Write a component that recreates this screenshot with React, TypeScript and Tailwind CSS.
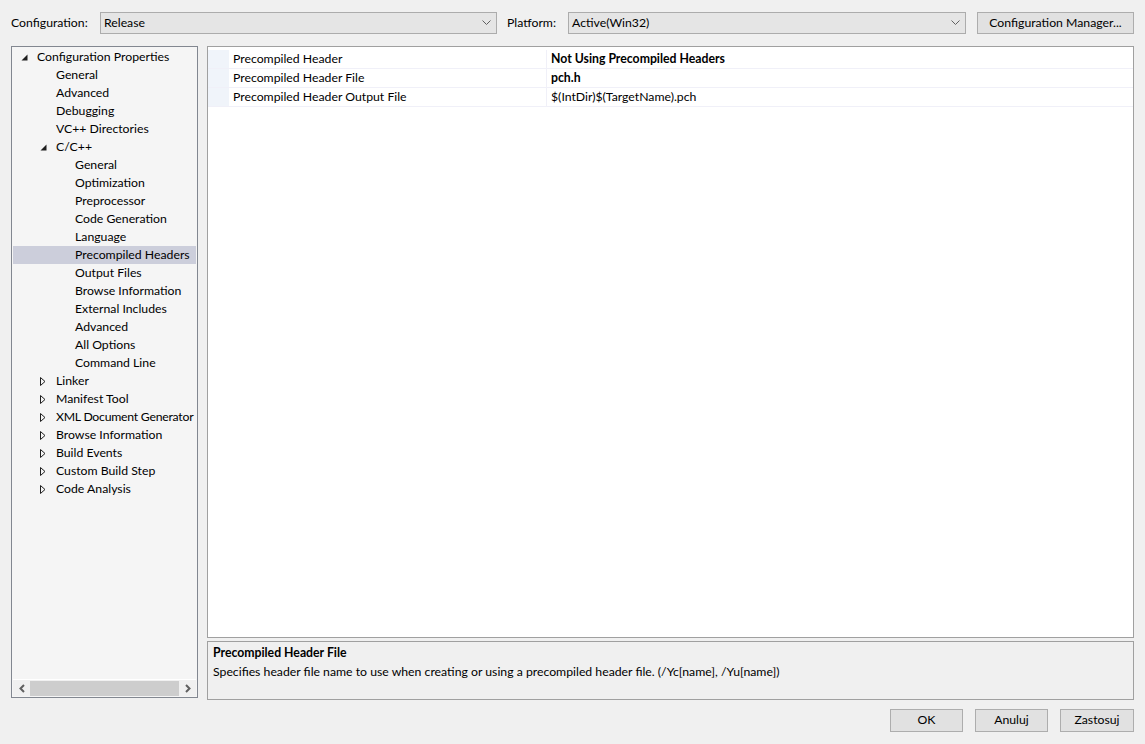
const font = { fontFamily: 'Lato, "Noto Sans", sans-serif' };

type Node = { label: string; level: number; arrow?: "open" | "closed"; selected?: boolean; tight?: boolean };

const tree: Node[] = [
  { label: "Configuration Properties", level: 0, arrow: "open" },
  { label: "General", level: 1 },
  { label: "Advanced", level: 1 },
  { label: "Debugging", level: 1 },
  { label: "VC++ Directories", level: 1 },
  { label: "C/C++", level: 1, arrow: "open" },
  { label: "General", level: 2 },
  { label: "Optimization", level: 2 },
  { label: "Preprocessor", level: 2 },
  { label: "Code Generation", level: 2 },
  { label: "Language", level: 2 },
  { label: "Precompiled Headers", level: 2, selected: true },
  { label: "Output Files", level: 2 },
  { label: "Browse Information", level: 2 },
  { label: "External Includes", level: 2 },
  { label: "Advanced", level: 2 },
  { label: "All Options", level: 2 },
  { label: "Command Line", level: 2 },
  { label: "Linker", level: 1, arrow: "closed" },
  { label: "Manifest Tool", level: 1, arrow: "closed" },
  { label: "XML Document Generator", level: 1, arrow: "closed", tight: true },
  { label: "Browse Information", level: 1, arrow: "closed" },
  { label: "Build Events", level: 1, arrow: "closed" },
  { label: "Custom Build Step", level: 1, arrow: "closed" },
  { label: "Code Analysis", level: 1, arrow: "closed" },
];

const rows = [
  { name: "Precompiled Header", value: "Not Using Precompiled Headers", bold: true },
  { name: "Precompiled Header File", value: "pch.h", bold: true },
  { name: "Precompiled Header Output File", value: "$(IntDir)$(TargetName).pch", bold: false },
];

function Chevron() {
  return (
    <svg width="9" height="6" viewBox="0 0 9 6" className="shrink-0">
      <path d="M0.5 0.5 L4.5 4.5 L8.5 0.5" fill="none" stroke="#606060" strokeWidth="1" />
    </svg>
  );
}

function Combo({ value, width }: { value: string; width: string }) {
  return (
    <div className={`${width} h-[22px] flex items-center justify-between bg-[#e5e5e5] border border-[#acacac] pl-[3px] pr-[5px]`}>
      <span>{value}</span>
      <Chevron />
    </div>
  );
}

function Arrow({ kind }: { kind?: "open" | "closed" }) {
  if (kind === "open")
    return (
      <svg width="7" height="7" viewBox="0 0 7 7">
        <path d="M6.5 0.5 L6.5 6.5 L0.5 6.5 Z" fill="#1e1e1e" />
      </svg>
    );
  if (kind === "closed")
    return (
      <svg width="6" height="9" viewBox="0 0 6 9">
        <path d="M0.5 0.5 L5 4.5 L0.5 8.5 Z" fill="none" stroke="#1e1e1e" strokeWidth="1" />
      </svg>
    );
  return null;
}

function Button({ label, width }: { label: string; width: string }) {
  return (
    <div className={`${width} h-[23px] flex items-center justify-center bg-[#e1e1e1] border border-[#adadad]`}>
      {label}
    </div>
  );
}

export default function App() {
  return (
    <div style={font} className="w-[1145px] h-[744px] bg-[#f0f0f0] text-[12.25px] text-black px-[11px] pt-[12px] overflow-hidden">
      {/* Top bar */}
      <div className="flex items-center h-[22px]">
        <span className="w-[89px]">Configuration:</span>
        <Combo value="Release" width="w-[397px]" />
        <span className="ml-[10px] w-[61px]">Platform:</span>
        <Combo value="Active(Win32)" width="w-[398px]" />
        <div className="ml-[11px] w-[157px] h-[22px] flex items-center justify-center bg-[#e1e1e1] border border-[#adadad]">
          Configuration Manager...
        </div>
      </div>

      {/* Main */}
      <div className="flex mt-[12px] h-[654px]">
        {/* Tree */}
        <div className="w-[187px] h-[652px] border border-[#828790] bg-[#f5f5f5] flex flex-col">
          <div className="flex-1 overflow-hidden pt-[1px]">
            {tree.map((n, i) => (
              <div
                key={i}
                className={`h-[18px] mx-[1px] flex items-center whitespace-nowrap overflow-hidden ${n.selected ? "bg-[#cccedb]" : ""}`}
                style={{ paddingLeft: 8 + n.level * 19 }}
              >
                <div className="w-[16px] shrink-0 flex items-center justify-start">
                  <Arrow kind={n.arrow} />
                </div>
                <span className={n.tight ? "tracking-[-0.25px]" : ""}>{n.label}</span>
              </div>
            ))}
          </div>
          <div className="h-[17px] mb-[1px] mx-[1px] flex items-center bg-[#f0f0f0] border-t border-white">
            <div className="w-[17px] flex justify-center">
              <svg width="6" height="9" viewBox="0 0 6 9">
                <path d="M5 1 L1.5 4.5 L5 8" fill="none" stroke="#606060" strokeWidth="2" />
              </svg>
            </div>
            <div className="flex-1 h-[15px] bg-[#cdcdcd]" />
            <div className="w-[17px] flex justify-center">
              <svg width="6" height="9" viewBox="0 0 6 9">
                <path d="M1 1 L4.5 4.5 L1 8" fill="none" stroke="#606060" strokeWidth="2" />
              </svg>
            </div>
          </div>
        </div>

        {/* Right column */}
        <div className="ml-[9px] flex-1 flex flex-col">
          <div className="h-[592px] border border-[#a0a0a0] bg-white pt-[3px]">
            {rows.map((r) => (
              <div key={r.name} className="flex h-[19px] border-b border-[#f0f0f8]">
                <div className="w-[21px] bg-[#f0f4fa]" />
                <div className="w-[318px] pl-[4px] flex items-center border-r border-[#f0f0f8]">{r.name}</div>
                <div className={`flex-1 pl-[4px] flex items-center ${r.bold ? "font-bold" : ""}`}>{r.value}</div>
              </div>
            ))}
          </div>
          <div className="mt-[3px] h-[59px] border border-[#a0a0a0] bg-[#f0f0f0] px-[5px] pt-[2px]">
            <div className="font-bold leading-[18px]">Precompiled Header File</div>
            <div className="leading-[20px]">
              Specifies header file name to use when creating or using a precompiled header file. (/Yc[name], /Yu[name])
            </div>
          </div>
        </div>
      </div>

      {/* Buttons */}
      <div className="flex justify-end gap-[12px] mt-[9px]">
        <Button label="OK" width="w-[73px]" />
        <Button label="Anuluj" width="w-[73px]" />
        <Button label="Zastosuj" width="w-[74px]" />
      </div>
    </div>
  );
}
